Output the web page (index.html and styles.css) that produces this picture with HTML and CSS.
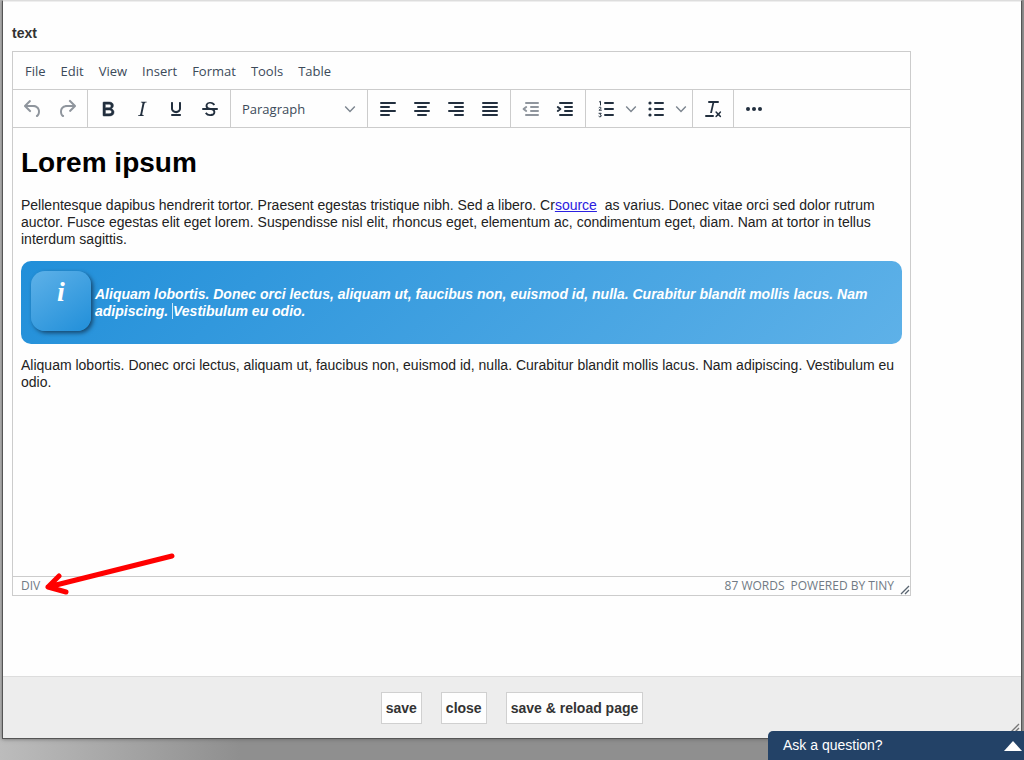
FILE: index.html
```html
<!DOCTYPE html>
<html lang="en">
<head>
<meta charset="utf-8">
<title>text</title>
<link rel="stylesheet" href="styles.css">
</head>
<body>
<main class="dialog">
  <section class="dialog-body">
    <h2 class="field-label">text</h2>
    <div class="editor">
      <nav class="menubar" aria-label="Editor menu">
        <button type="button">File</button>
        <button type="button">Edit</button>
        <button type="button">View</button>
        <button type="button">Insert</button>
        <button type="button">Format</button>
        <button type="button">Tools</button>
        <button type="button">Table</button>
      </nav>
      <div class="toolbar" role="toolbar" aria-label="Formatting">
        <div class="group">
          <button type="button" class="tool" disabled aria-label="Undo"><svg viewBox="0 0 24 24"><path d="M6.4 8H12c3.7 0 6.2 2 6.8 5.1.6 2.7-.4 5.6-2.3 6.8a1 1 0 01-1-1.8c1.1-.6 1.8-2.7 1.4-4.6-.5-2.1-2.1-3.5-4.9-3.5H6.4l3.3 3.3a1 1 0 11-1.4 1.4l-5-5a1 1 0 010-1.4l5-5a1 1 0 011.4 1.4L6.4 8z"/></svg></button>
          <button type="button" class="tool" disabled aria-label="Redo"><svg viewBox="0 0 24 24"><path d="M17.6 10H12c-2.8 0-4.4 1.4-4.9 3.5-.4 2 .3 4 1.4 4.6a1 1 0 11-1 1.8c-2-1.2-2.9-4.1-2.3-6.8.6-3 3-5.1 6.8-5.1h5.6l-3.3-3.3a1 1 0 111.4-1.4l5 5a1 1 0 010 1.4l-5 5a1 1 0 01-1.4-1.4l3.3-3.3z"/></svg></button>
        </div>
        <div class="group">
          <button type="button" class="tool" aria-label="Bold"><svg viewBox="0 0 24 24"><path stroke="currentColor" stroke-width=".5" d="M7.8 19c-.3 0-.5 0-.6-.2l-.2-.5V5.7c0-.2 0-.4.2-.5l.6-.2h5c1.5 0 2.7.3 3.5 1 .7.6 1.1 1.4 1.1 2.5a3 3 0 01-.6 1.9c-.4.6-1 1-1.6 1.2.4.1.9.3 1.3.6s.8.7 1 1.2c.4.4.5 1 .5 1.6 0 1.3-.4 2.3-1.3 3-.8.7-2.1 1-3.8 1H7.8zm5-8.3c.6 0 1.2-.1 1.6-.5.4-.3.6-.7.6-1.3 0-1.1-.8-1.7-2.3-1.7H9.3v3.5h3.4zm.5 6c.7 0 1.3-.1 1.7-.4.4-.4.6-.9.6-1.5s-.2-1-.7-1.4c-.4-.3-1-.4-2-.4H9.4v3.8h4z"/></svg></button>
          <button type="button" class="tool" aria-label="Italic"><svg viewBox="0 0 24 24"><path d="M16.7 4.7l-.1.9h-.3c-.6 0-1 0-1.4.3-.3.3-.4.6-.5 1.1l-2.1 9.8v.6c0 .5.4.8 1.4.8h.2l-.2.8H8l.2-.8h.2c1.1 0 1.8-.5 2-1.5l2-9.8.1-.5c0-.6-.4-.8-1.4-.8h-.3l.2-.9h5.8z"/></svg></button>
          <button type="button" class="tool" aria-label="Underline"><svg viewBox="0 0 24 24"><path d="M16 5c.6 0 1 .4 1 1v5.5a4 4 0 01-.4 1.8l-1 1.4a5.3 5.3 0 01-5.5 1 5 5 0 01-1.6-1c-.5-.4-.8-.9-1.1-1.4a4 4 0 01-.4-1.8V6c0-.6.4-1 1-1s1 .4 1 1v5.5c0 .3 0 .6.2 1l.6.7a3.3 3.3 0 002.2.8 3.4 3.4 0 002.2-.8c.3-.2.4-.5.6-.8l.2-.9V6c0-.6.4-1 1-1zM8 17h8c.6 0 1 .4 1 1s-.4 1-1 1H8a1 1 0 010-2z"/></svg></button>
          <button type="button" class="tool" aria-label="Strikethrough"><svg viewBox="0 0 24 24"><path d="M15.6 8.5c-.5-.7-1-1.1-1.3-1.3-.6-.4-1.3-.6-2-.6-2.7 0-2.8 1.7-2.8 2.1 0 1.6 1.8 2 3.2 2.3 4.4.9 4.6 2.8 4.6 3.9 0 1.4-.7 4.1-5 4.1A6.2 6.2 0 017 16.4l1.5-1.1c.4.6 1.6 2 3.7 2 1.6 0 2.5-.4 3-1.2.4-.8.3-2-.8-2.6-.7-.4-1.6-.7-2.9-1-1-.2-3.9-.8-3.9-3.6C7.6 6 10.3 5 12.4 5c2.9 0 4.2 1.6 4.7 2.4l-1.5 1.1z"/><path d="M5 11h14a1 1 0 010 2H5a1 1 0 010-2z"/></svg></button>
        </div>
        <div class="group">
          <div class="format">
            <select class="format-select" aria-label="Block format"><option>Paragraph</option></select>
            <svg class="chevron" viewBox="0 0 10 10"><path d="M1 3l4 4 4-4"/></svg>
          </div>
        </div>
        <div class="group">
          <button type="button" class="tool" aria-label="Align left"><svg class="lines" viewBox="0 0 24 24"><path d="M5 6h14M5 10h8M5 14h14M5 18h8"/></svg></button>
          <button type="button" class="tool" aria-label="Align center"><svg class="lines" viewBox="0 0 24 24"><path d="M5 6h14M8 10h8M5 14h14M8 18h8"/></svg></button>
          <button type="button" class="tool" aria-label="Align right"><svg class="lines" viewBox="0 0 24 24"><path d="M5 6h14M11 10h8M5 14h14M11 18h8"/></svg></button>
          <button type="button" class="tool" aria-label="Justify"><svg class="lines" viewBox="0 0 24 24"><path d="M5 6h14M5 10h14M5 14h14M5 18h14"/></svg></button>
        </div>
        <div class="group">
          <button type="button" class="tool" disabled aria-label="Decrease indent"><svg class="lines" viewBox="0 0 24 24"><path d="M7 6h12M12 10h7M12 14h7M7 18h12"/><path d="M7.2 10L4.6 12l2.6 2" fill="none"/></svg></button>
          <button type="button" class="tool" aria-label="Increase indent"><svg class="lines" viewBox="0 0 24 24"><path d="M7 6h12M12 10h7M12 14h7M7 18h12"/><path d="M4.8 10l2.6 2-2.6 2" fill="none"/></svg></button>
        </div>
        <div class="group">
          <button type="button" class="tool" aria-label="Numbered list"><svg class="lines" viewBox="0 0 24 24"><path d="M11 6h8M11 12h8M11 18h8"/><path class="thin" d="M5.4 4.9l1.1-.6V8M5 10.6c.6-.7 2.3-.5 2.1.5-.1.7-1.5 1.2-2.1 2.1h2.4M5 16.3h2.2L6 17.8c1.9 0 1.7 2.1 0 2-.5 0-.8-.1-1.1-.4"/></svg></button>
          <button type="button" class="split" aria-label="Numbered list styles"><svg class="chevron" viewBox="0 0 10 10"><path d="M1 3l4 4 4-4"/></svg></button>
          <button type="button" class="tool" aria-label="Bullet list"><svg class="lines" viewBox="0 0 24 24"><path d="M11 6h8M11 12h8M11 18h8"/><g stroke="none"><circle cx="6" cy="6" r="1.6"/><circle cx="6" cy="12" r="1.6"/><circle cx="6" cy="18" r="1.6"/></g></svg></button>
          <button type="button" class="split" aria-label="Bullet list styles"><svg class="chevron" viewBox="0 0 10 10"><path d="M1 3l4 4 4-4"/></svg></button>
        </div>
        <div class="group">
          <button type="button" class="tool" aria-label="Clear formatting"><svg viewBox="0 0 24 24"><path d="M13.2 6L10.9 16H9.1l2.3-10H8a1 1 0 110-2h9a1 1 0 010 2h-3.8zM5 18h7a1 1 0 010 2H5a1 1 0 010-2zM17.3 16.2l1.6-1.7a.8.8 0 011.1 1.1l-1.6 1.7 1.6 1.7a.8.8 0 01-1.1 1.1l-1.6-1.7-1.7 1.7a.8.8 0 01-1.1-1.1l1.7-1.7-1.7-1.7a.8.8 0 011.1-1.1z"/></svg></button>
        </div>
        <div class="group">
          <button type="button" class="tool" aria-label="More"><svg viewBox="0 0 24 24"><circle cx="6" cy="12" r="2"/><circle cx="12" cy="12" r="2"/><circle cx="18" cy="12" r="2"/></svg></button>
        </div>
      </div>
      <article class="content">
        <h1>Lorem ipsum</h1>
        <p>Pellentesque dapibus hendrerit tortor. Praesent egestas tristique nibh. Sed a libero. Cr<a href="#source">source</a>&nbsp; as varius. Donec vitae orci sed dolor rutrum auctor. Fusce egestas elit eget lorem. Suspendisse nisl elit, rhoncus eget, elementum ac, condimentum eget, diam. Nam at tortor in tellus interdum sagittis.</p>
        <div class="info">
          <span class="info-icon">i</span>
          <div class="info-text">Aliquam lobortis. Donec orci lectus, aliquam ut, faucibus non, euismod id, nulla. Curabitur blandit mollis lacus. Nam adipiscing. <span class="caret"></span>Vestibulum eu odio.</div>
        </div>
        <p>Aliquam lobortis. Donec orci lectus, aliquam ut, faucibus non, euismod id, nulla. Curabitur blandit mollis lacus. Nam adipiscing. Vestibulum eu odio.</p>
      </article>
      <footer class="statusbar">
        <span class="path">DIV</span>
        <span>87 WORDS</span>
        <a href="#tiny">POWERED BY TINY</a>
        <svg class="grip" viewBox="0 0 10 10"><path d="M1 9l8-8M5 9l4-4"/></svg>
      </footer>
      <svg class="arrow" viewBox="0 0 130 42"><path d="M127 3L3 34M14 23L3 34l18 5"/></svg>
    </div>
  </section>
  <footer class="actions">
    <button type="button">save</button>
    <button type="button">close</button>
    <button type="button">save &amp; reload page</button>
    <svg class="dialog-grip" viewBox="0 0 10 10"><path d="M1 9l8-8M5 9l4-4"/></svg>
  </footer>
</main>
<button type="button" class="ask"><span>Ask a question?</span><svg viewBox="0 0 18 10"><path d="M0 10l9-10 9 10z"/></svg></button>
</body>
</html>
```
FILE: styles.css
```css
* { box-sizing: border-box; }

body {
  margin: 0;
  min-height: 100vh;
  padding: 0 2px 21px 2px;
  display: flex;
  flex-direction: column;
  background: linear-gradient(to right, #bcbcbc, #8f8f8f 240px, #8f8f8f 80%, #999);
  font-family: "Liberation Sans", Arial, sans-serif;
  font-size: 14px;
  line-height: 17px;
  color: #222;
}

button, select { font: inherit; color: inherit; margin: 0; padding: 0; border: 0; background: none; }

.dialog {
  flex: 1;
  display: flex;
  flex-direction: column;
  border: 1px solid #555;
  border-top-color: #ddd;
  background: #fefefe;
  box-shadow: 0 0 4px #666;
}
.dialog-body { flex: 1; padding: 23px 110px 0 9px; border-top: 1px solid #eee; }
.field-label { margin: 0 0 9px; font-size: 14px; line-height: 17px; color: #333; }

.editor { position: relative; border: 1px solid #ccc; background: #fefefe; }

.menubar {
  display: flex;
  height: 37px;
  align-items: center;
  padding-left: 4px;
  font: 13px/20px "Open Sans", "Noto Sans", sans-serif;
  color: #3c4a5a;
}
.menubar button { padding: 0 8px 0 7px; }
.menubar button:first-child { padding-left: 8px; }

.toolbar { display: flex; height: 39px; border-top: 1px solid #ccc; border-bottom: 1px solid #ccc; }
.group { display: flex; align-items: center; padding: 0 3px; border-right: 1px solid #ccc; }
.group:last-child { border-right: 0; }
.tool { width: 34px; height: 34px; display: grid; place-items: center; color: #222f3e; }
.tool:disabled { color: #222f3e; opacity: .5; }
.tool svg { width: 24px; height: 24px; fill: currentColor; }
.tool .lines { stroke: currentColor; stroke-width: 2; stroke-linecap: round; stroke-linejoin: round; }
.tool .thin { fill: none; stroke-width: 1; }
.split { width: 16px; height: 34px; display: grid; place-items: center; }
.chevron { width: 12px; height: 12px; fill: none; stroke: #7c858f; stroke-width: 1.2; }
.format { display: grid; grid-template-columns: 1fr 12px; align-items: center; width: 130px; padding: 0 8px; }
.format-select {
  appearance: none;
  grid-area: 1 / 1 / 2 / 3;
  height: 34px;
  font: 13px/20px "Open Sans", "Noto Sans", sans-serif;
  color: #3c4a5a;
}
.format .chevron { grid-area: 1 / 2; pointer-events: none; }

.content { min-height: 448px; padding: 19px 8px 0; }
.content h1 { margin: 0 0 18px; font-size: 28px; line-height: 32px; color: #000; }
.content p { margin: 0 0 13px; }
.content a { color: #2a20e0; }

.info {
  display: flex;
  align-items: center;
  gap: 4px;
  min-height: 83px;
  margin-bottom: 13px;
  padding: 10px;
  border-radius: 10px;
  background: linear-gradient(135deg, #218fd9, #5eb1e8);
  color: #fff;
  font-weight: bold;
  font-style: italic;
}
.info-icon {
  flex: none;
  align-self: flex-start;
  width: 60px;
  height: 60px;
  padding-top: 6px;
  border-radius: 14px;
  background: linear-gradient(145deg, #5eb1e8, #218fd9);
  box-shadow: 2px 2px 4px #16466c;
  font: italic bold 28px/30px "Liberation Serif", "Times New Roman", serif;
  text-align: center;
}
.caret { border-left: 1px solid #cfe6f7; }

.statusbar {
  display: flex;
  align-items: center;
  gap: 6px;
  height: 19px;
  padding: 0 0 0 8px;
  border-top: 1px solid #ccc;
  font: 12px/18px "Open Sans", "Noto Sans", sans-serif;
  color: #717a84;
}
.statusbar a { color: inherit; text-decoration: none; }
.path { flex: 1; }
.grip, .dialog-grip { width: 10px; height: 10px; fill: none; stroke: #5a6570; stroke-width: 1.3; }
.grip { align-self: flex-end; }

.arrow {
  position: absolute;
  left: 32px;
  bottom: 0;
  width: 130px;
  height: 42px;
  fill: none;
  stroke: #f00;
  stroke-width: 5;
  stroke-linecap: round;
  stroke-linejoin: round;
}

.actions {
  position: relative;
  display: flex;
  justify-content: center;
  gap: 19px;
  height: 62px;
  padding-top: 15px;
  border-top: 1px solid #ddd;
  background: #ededed;
}
.actions button {
  height: 32px;
  padding: 0 4px;
  border: 1px solid #d0d0d0;
  background: #fefefe;
  font-weight: bold;
  color: #333;
}
.dialog-grip { position: absolute; right: 1px; bottom: 5px; stroke: #777; }

.ask {
  position: fixed;
  right: 0;
  bottom: 0;
  display: flex;
  align-items: center;
  justify-content: space-between;
  width: 256px;
  height: 29px;
  padding: 0 2px 0 15px;
  border-radius: 5px 0 0;
  background: #234267;
  color: #fff;
}
.ask svg { width: 18px; height: 10px; fill: #fff; }
```
